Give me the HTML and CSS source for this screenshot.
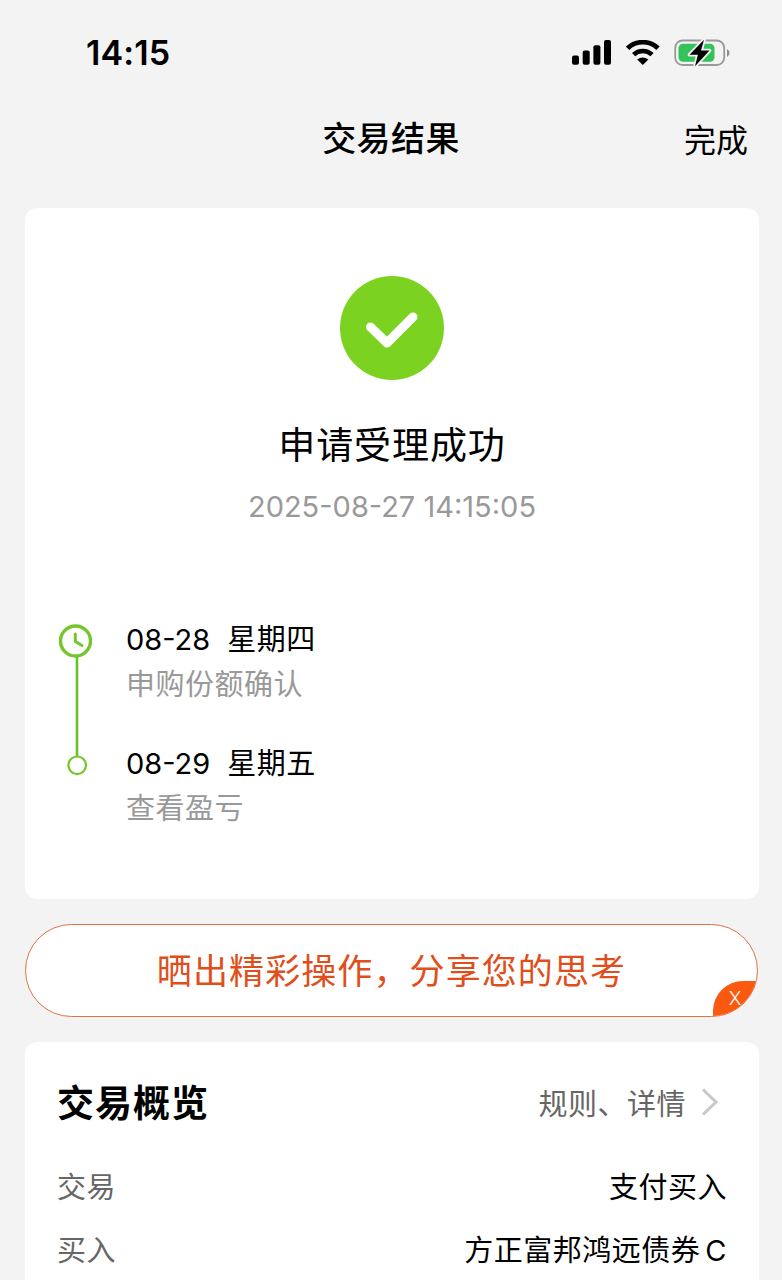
FILE: index.html
```html
<!DOCTYPE html>
<html lang="zh-CN">
<head>
  <meta charset="UTF-8" />
  <meta name="viewport" content="width=device-width, initial-scale=1.0"/>
  <title>交易结果</title>
  <link rel="stylesheet" href="styles.css">
</head>
<body>

  <div class="status-bar">
    <span class="time">14:15</span>
    <div class="status-icons">
      <svg width="40" height="26" viewBox="0 0 40 26">
        <rect x="0" y="15.5" width="7" height="9.3" rx="2"/>
        <rect x="10.7" y="10.5" width="7" height="14.3" rx="2"/>
        <rect x="21.4" y="5.3" width="7" height="19.5" rx="2"/>
        <rect x="32" y="0" width="7" height="24.8" rx="2"/>
      </svg>
      <svg width="34" height="26" viewBox="0 0 34 26">
        <path d="M1.6 8.3A22 22 0 0 1 32 8.3" fill="none" stroke="#000" stroke-width="4.8"/>
        <path d="M7.6 14.6A13.4 13.4 0 0 1 26 14.6" fill="none" stroke="#000" stroke-width="4.6"/>
        <path d="M16.8 25L11.2 19.6Q16.8 15.2 22.4 19.6Z"/>
      </svg>
      <svg width="57" height="30" viewBox="0 0 57 30">
        <rect x="1.2" y="2.5" width="49" height="24.5" rx="7.5" fill="none" stroke="#999" stroke-width="1.8"/>
        <rect x="4.5" y="5.8" width="36" height="18" rx="4.5" fill="#34c35b"/>
        <path d="M53 11v8q2.6-1.3 2.6-4T53 11z" fill="#8e8e8e"/>
        <path d="M30 1.8L15.5 16.8h8.4L21 28.3 35.5 12.6h-8.5z" stroke="#f3f3f3" stroke-width="3.6" paint-order="stroke" stroke-linejoin="round"/>
      </svg>
    </div>
  </div>

  <header class="nav">
    <h1>交易结果</h1>
    <a class="done">完成</a>
  </header>

  <section class="card result">
    <svg class="success" width="104" height="104" viewBox="0 0 104 104">
      <circle cx="52" cy="52" r="52" fill="#7cd220"/>
      <path d="M30.5 51L47 67 73 41" fill="none" stroke="#fff" stroke-width="9" stroke-linecap="round" stroke-linejoin="round"/>
    </svg>
    <h2>申请受理成功</h2>
    <p class="datetime">2025-08-27 14:15:05</p>

    <div class="timeline">
      <svg class="track" width="36" height="154" viewBox="0 0 36 154">
        <circle cx="16.5" cy="18" r="15" fill="none" stroke="#74c62b" stroke-width="3.4"/>
        <path d="M16.3 11V18.5L23 22.5" fill="none" stroke="#74c62b" stroke-width="3" stroke-linecap="round" stroke-linejoin="round"/>
        <path d="M18 34V133" stroke="#68c128" stroke-width="2.6"/>
        <circle cx="18.2" cy="142.3" r="8.8" fill="none" stroke="#74c62b" stroke-width="2.2"/>
      </svg>
      <div class="steps">
        <div class="step">
          <p class="step-date"><span>08-28</span><span class="weekday">星期四</span></p>
          <p class="step-text">申购份额确认</p>
        </div>
        <div class="step">
          <p class="step-date"><span>08-29</span><span class="weekday">星期五</span></p>
          <p class="step-text">查看盈亏</p>
        </div>
      </div>
    </div>
  </section>

  <div class="share">
    <span class="share-text">晒出精彩操作，分享您的思考</span>
    <span class="close">X</span>
  </div>

  <section class="card overview">
    <div class="overview-head">
      <h3>交易概览</h3>
      <a class="more">规则、详情
        <svg width="18" height="30" viewBox="0 0 18 30">
          <path d="M2 2.5L15 15 2 27.5" fill="none" stroke="#c8c8ca" stroke-width="3"/>
        </svg>
      </a>
    </div>
    <div class="row">
      <span class="label">交易</span>
      <span class="value">支付买入</span>
    </div>
    <div class="row">
      <span class="label">买入</span>
      <span class="value">方正富邦鸿远债券<span class="share-class">C</span></span>
    </div>
  </section>

</body>
</html>
```
FILE: styles.css
```css
* {
  box-sizing: border-box;
}

body {
  margin: 0;
  height: 1280px;
  overflow: hidden;
  background-color: #f3f3f3;
  color: #000;
  font-family: Inter, "Noto Sans CJK SC", sans-serif;
}

h1, h2, h3, p {
  margin: 0;
}

svg {
  display: block;
}

.status-bar {
  display: flex;
  justify-content: space-between;
  align-items: center;
  height: 105px;
  padding: 0 51px 0 86px;
}

.time {
  font-size: 34px;
  font-weight: 600;
  letter-spacing: 0.1px;
}

.status-icons {
  display: flex;
  align-items: center;
  gap: 14px;
}

.nav {
  display: grid;
  grid-template-columns: 1fr auto 1fr;
  align-items: center;
  height: 67px;
  padding: 0 34px;
}

.nav h1 {
  grid-column: 2;
  font-size: 34px;
  font-weight: 500;
  letter-spacing: 0.4px;
  line-height: 48px;
}

.done {
  justify-self: end;
  padding-top: 4px;
  font-size: 32px;
  line-height: 48px;
}

.card {
  margin: 0 23px 0 25px;
  background: #fff;
  border-radius: 12px;
}

.result {
  display: flex;
  flex-direction: column;
  align-items: center;
  height: 691px;
  margin-top: 36px;
  padding-top: 68px;
}

.result h2 {
  margin-top: 39px;
  font-size: 37px;
  font-weight: 400;
  letter-spacing: 0.9px;
  line-height: 54px;
}

.datetime {
  margin-top: 14px;
  color: #999;
  font-size: 29px;
  line-height: 40px;
}

.timeline {
  display: flex;
  align-self: stretch;
  gap: 31px;
  margin-top: 96px;
  padding-left: 34px;
}

.steps {
  display: flex;
  flex-direction: column;
  gap: 33px;
  margin-top: -6px;
}

.step-date {
  display: flex;
  gap: 17px;
  font-size: 29px;
  line-height: 45px;
}

.weekday,
.step-text {
  letter-spacing: 0.5px;
}

.step-text {
  color: #999;
  font-size: 29px;
  line-height: 46px;
}

.share {
  position: relative;
  display: flex;
  justify-content: center;
  align-items: center;
  height: 93px;
  margin: 25px 24px 0 25px;
  overflow: hidden;
  background: #fff;
  border: 1.5px solid #df7342;
  border-radius: 47px;
}

.share-text {
  padding-top: 1px;
  color: #e04e1b;
  font-size: 35px;
  letter-spacing: 1.1px;
  line-height: 50px;
}

/* corner button, clipped by the pill */
.close {
  position: absolute;
  right: 0;
  bottom: 0;
  width: 44px;
  height: 35px;
  background: #f95a10;
  border-top-left-radius: 30px;
  color: #fff;
  font-size: 19px;
  font-weight: 300;
  line-height: 36px;
  text-align: center;
}

.overview {
  height: 260px;
  margin-top: 25px;
  padding: 29px 32px 0;
}

.overview-head {
  display: flex;
  justify-content: space-between;
  align-items: center;
  height: 60px;
  margin-bottom: 22px;
}

.overview h3 {
  font-size: 37px;
  font-weight: 700;
  letter-spacing: 1px;
}

.more {
  display: flex;
  align-items: center;
  gap: 15px;
  padding: 2px 8px 0 0;
  color: #666;
  font-size: 29px;
  letter-spacing: 0.5px;
}

.row {
  display: flex;
  justify-content: space-between;
  align-items: center;
  height: 63px;
  font-size: 29px;
  letter-spacing: 0.5px;
}

.label {
  color: #666;
}

.share-class {
  margin-left: 5px;
}
```
